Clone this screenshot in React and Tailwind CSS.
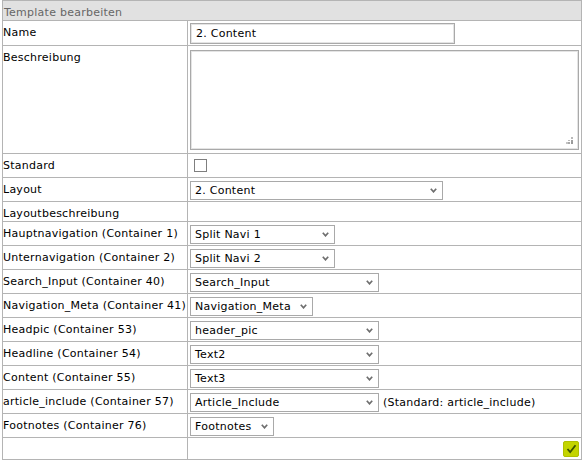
import React from 'react';

const containers = [
  { label: 'Hauptnavigation (Container 1)', value: 'Split Navi 1', w: 'w-[145px]' },
  { label: 'Unternavigation (Container 2)', value: 'Split Navi 2', w: 'w-[145px]' },
  { label: 'Search_Input (Container 40)', value: 'Search_Input', w: 'w-[189px]' },
  { label: 'Navigation_Meta (Container 41)', value: 'Navigation_Meta', w: 'w-[123px]' },
  { label: 'Headpic (Container 53)', value: 'header_pic', w: 'w-[189px]' },
  { label: 'Headline (Container 54)', value: 'Text2', w: 'w-[189px]' },
  { label: 'Content (Container 55)', value: 'Text3', w: 'w-[189px]' },
  { label: 'article_include (Container 57)', value: 'Article_Include', w: 'w-[189px]', note: '(Standard: article_include)' },
  { label: 'Footnotes (Container 76)', value: 'Footnotes', w: 'w-[84px]' },
];

const Chevron = () => (
  <svg width="7" height="5" viewBox="0 0 7 5" className="shrink-0">
    <polyline points="0.8,0.8 3.5,3.8 6.2,0.8" fill="none" stroke="#6e6e6e" strokeWidth="1.7" />
  </svg>
);

const Select = ({ value, w }) => (
  <div className={`${w} h-[19px] flex items-center justify-between border border-[#a9a9a9] bg-white pl-[4px] pr-[5px] shrink-0`}>
    <span className="leading-[13px] whitespace-nowrap">{value}</span>
    <Chevron />
  </div>
);

const Row = ({ label, h, children, cell = '' }) => (
  <div className={`flex border-t border-[#b4b4b4] ${h}`}>
    <div className="w-[185px] shrink-0 border-r border-[#b4b4b4] pt-[5px] leading-[13px] whitespace-nowrap">
      {label}
    </div>
    <div className={`flex-1 pl-[2px] ${cell}`}>{children}</div>
  </div>
);

export default function App() {
  return (
    <div className="w-[585px] h-[465px] bg-white font-['DejaVu_Sans',Verdana,sans-serif] text-[11px] tracking-[0.25px] text-black">
      <div className="ml-[2px] w-[580px] border border-[#b4b4b4]">
        {/* Header */}
        <div className="h-[19px] bg-[#e1e1e1] pl-[1px] pt-[5px] leading-[13px] text-[#666666]">
          Template bearbeiten
        </div>

        <Row label="Name" h="h-[25px]" cell="pt-[2px]">
          <div className="w-[265px] h-[21px] flex items-center border border-[#a9a9a9] shadow-[inset_0_0_0_1px_#e4e4e4] pl-[5px] leading-[13px]">
            2. Content
          </div>
        </Row>

        <Row label="Beschreibung" h="h-[108px]" cell="pt-[4px]">
          <div className="w-[389px] h-[100px] flex items-end justify-end border border-[#a9a9a9] shadow-[inset_0_0_0_1px_#e4e4e4] pr-[5px] pb-[5px]">
            <svg width="7" height="7" viewBox="0 0 7 7">
              <rect x="5" y="0" width="2" height="2" fill="#b8b8b8" />
              <rect x="2" y="3" width="2" height="1" fill="#b8b8b8" />
              <rect x="5" y="3" width="2" height="2" fill="#a0a0a0" />
              <rect x="0" y="5" width="2" height="2" fill="#c4c4c4" />
              <rect x="2" y="5" width="2" height="2" fill="#a8a8a8" />
              <rect x="5" y="5" width="2" height="2" fill="#999999" />
            </svg>
          </div>
        </Row>

        <Row label="Standard" h="h-[24px]" cell="pt-[5px] pl-[6px]">
          <div className="w-[13px] h-[13px] border border-[#7f7f7f] bg-white" />
        </Row>

        <Row label="Layout" h="h-[24px]" cell="pt-[3px]">
          <Select value="2. Content" w="w-[253px]" />
        </Row>

        <Row label="Layoutbeschreibung" h="h-[20px]" />

        {containers.map((c) => (
          <Row key={c.label} label={c.label} h="h-[24px]" cell="pt-[3px]">
            <div className="flex items-center gap-[4px]">
              <Select value={c.value} w={c.w} />
              {c.note && <span className="leading-[13px] whitespace-nowrap">{c.note}</span>}
            </div>
          </Row>
        ))}

        <Row label="" h="h-[22px]" cell="pt-[3px] pr-[2px] flex justify-end items-start">
          <button className="w-4 h-4 flex items-center justify-center rounded-[2px] bg-[#c3d400] border border-[#b0c000]">
            <svg width="11" height="10" viewBox="0 0 11 10">
              <polyline points="1.5,5 4.2,8 9.5,1.2" fill="none" stroke="#3b5200" strokeWidth="1.8" />
            </svg>
          </button>
        </Row>
      </div>
    </div>
  );
}
